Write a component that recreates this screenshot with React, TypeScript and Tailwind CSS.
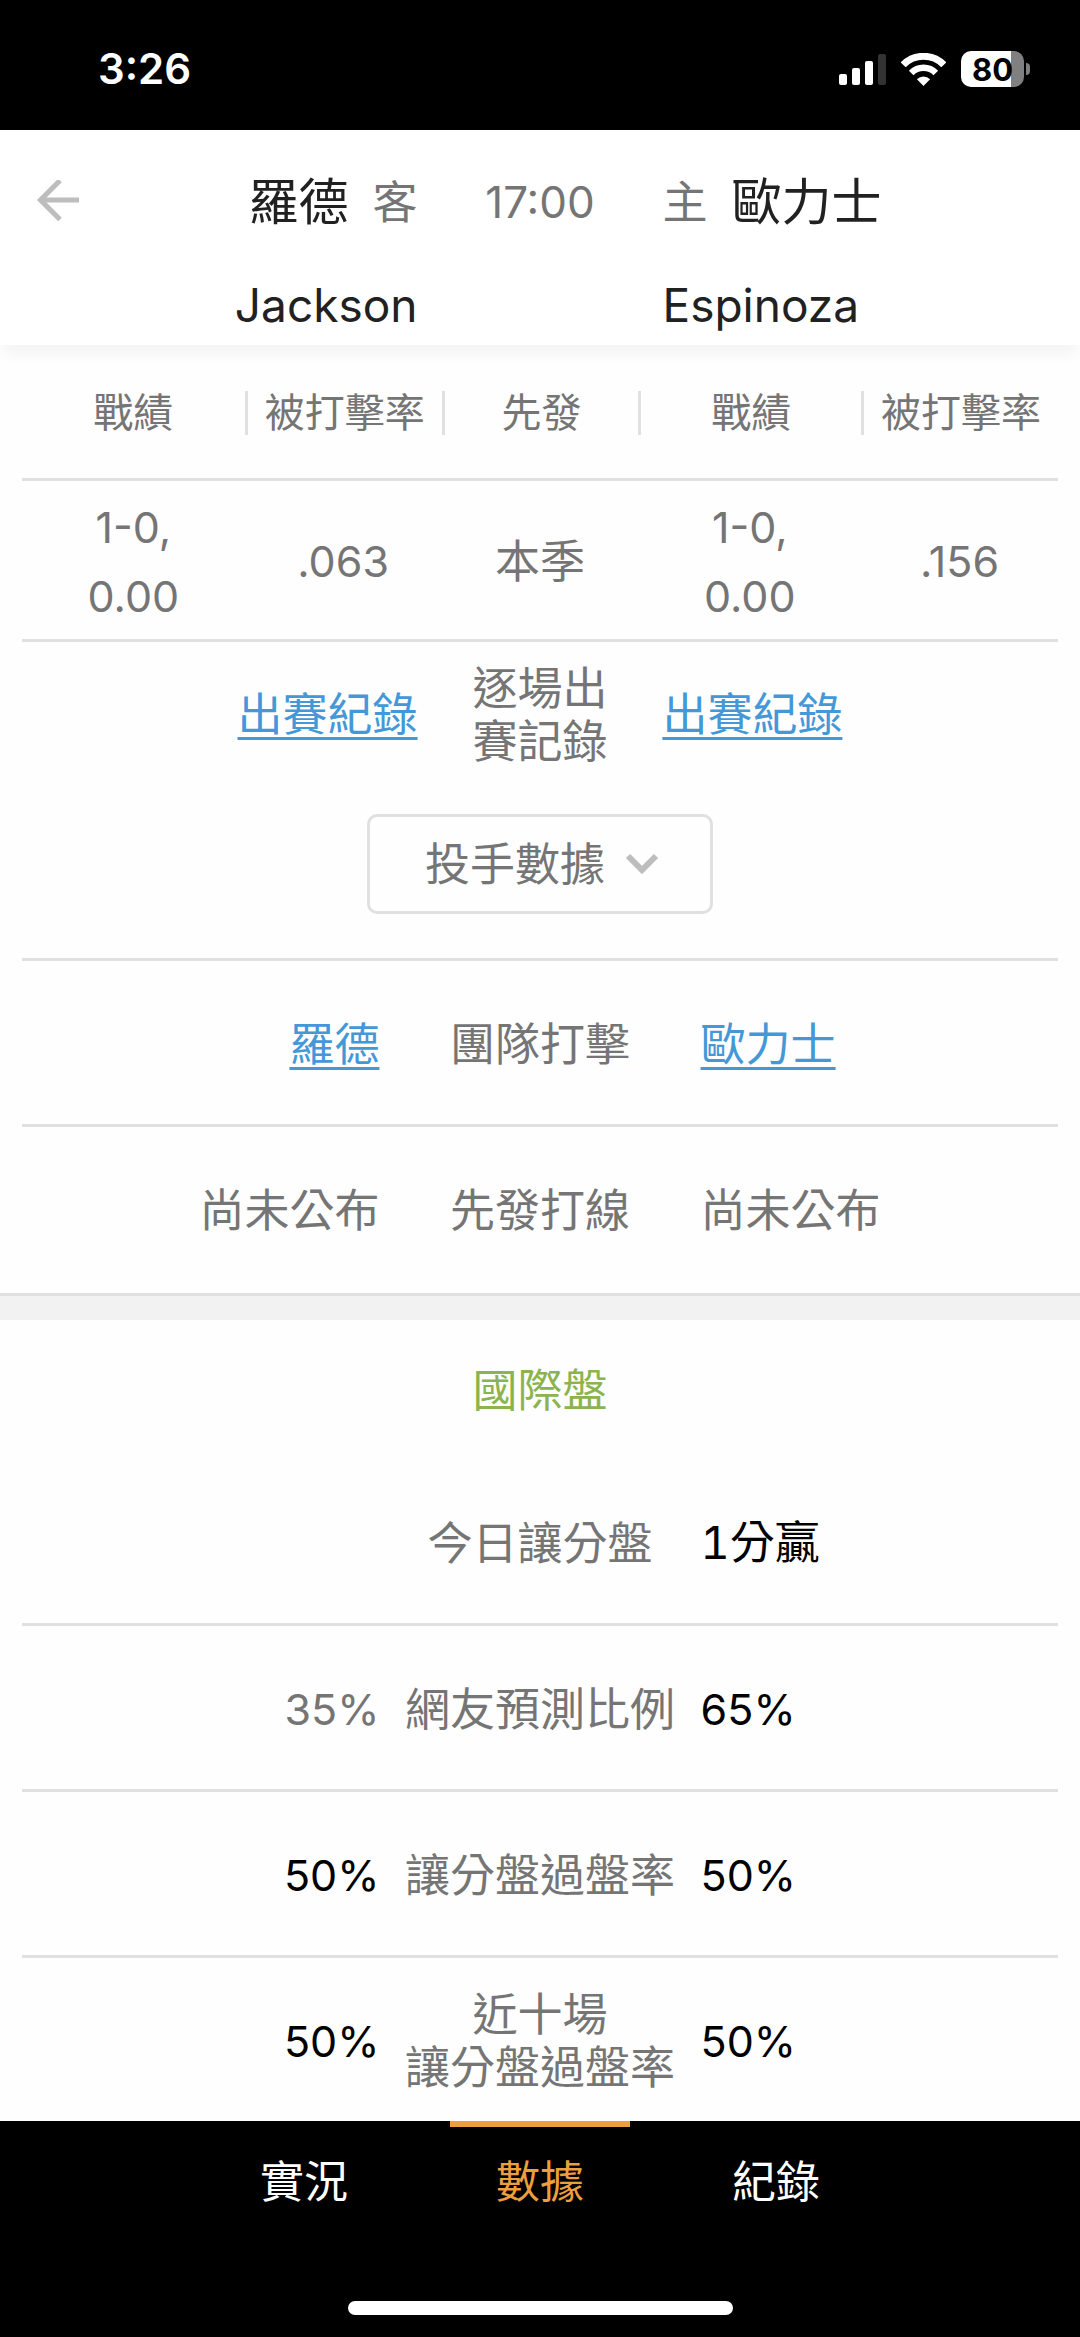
import { useState, type ReactNode } from 'react'

type Side = {
  team: string
  pitcher: string
  record: string
  era: string
  opponentAvg: string
}

type CompareRow = {
  label: ReactNode
  away: ReactNode
  home: ReactNode
  mutedAway?: boolean
}

const away: Side = { team: '羅德', pitcher: 'Jackson', record: '1-0,', era: '0.00', opponentAvg: '.063' }
const home: Side = { team: '歐力士', pitcher: 'Espinoza', record: '1-0,', era: '0.00', opponentAvg: '.156' }

const oddsRows: CompareRow[] = [
  { label: '今日讓分盤', away: '', home: <span className="text-[45px] tabular-nums">1分贏</span> },
  { label: '網友預測比例', away: '35%', home: '65%', mutedAway: true },
  { label: '讓分盤過盤率', away: '50%', home: '50%' },
  {
    label: (
      <>
        近十場
        <br />
        讓分盤過盤率
      </>
    ),
    away: '50%',
    home: '50%',
  },
]

const tabs = ['實況', '數據', '紀錄']

function StatusBar() {
  return (
    <div className="flex h-[130px] items-center justify-between bg-black pt-2 pr-[50px] pl-[98px] text-white">
      <span className="text-[42px] leading-none font-semibold">3:26</span>
      <div className="flex items-center gap-[15px]">
        {/* Signal */}
        <svg width="47" height="31" viewBox="0 0 47 31" fill="#fff" aria-hidden="true">
          <rect x="0" y="20" width="8" height="11" rx="2" />
          <rect x="13" y="14" width="8" height="17" rx="2" />
          <rect x="26" y="7" width="8" height="24" rx="2" />
          <rect x="39" y="0" width="8" height="31" rx="2" fill="#333" />
        </svg>
        {/* Wifi */}
        <svg width="45" height="33" viewBox="0 0 45 33" aria-hidden="true">
          <path d="M2.200 11.800a28.500 28.500 0 0 1 40.600 0" fill="none" stroke="#fff" strokeWidth="7" />
          <path d="M10.200 20a17.200 17.200 0 0 1 24.600 0" fill="none" stroke="#fff" strokeWidth="6.500" />
          <path d="M22.500 33l-6.600-6.800a9.600 9.600 0 0 1 13.200 0z" fill="#fff" />
        </svg>
        {/* Battery */}
        <div className="flex items-center gap-0.5">
          <div className="flex h-9 w-[63px] items-center justify-center rounded-[10px] bg-linear-to-r from-white from-80% to-[#808080] to-80% text-[31px] leading-none font-bold text-black">
            80
          </div>
          <div className="h-3 w-1 rounded-r-full bg-[#808080]" />
        </div>
      </div>
    </div>
  )
}

function MatchHeader() {
  return (
    <header className="grid grid-cols-[1fr_245px_1fr] gap-y-[15px] bg-white pt-6 shadow-[0_14px_12px_-4px_rgba(0,0,0,0.04)]">
      <div className="flex h-24 items-center pl-9">
        <button type="button" aria-label="返回">
          <svg width="44" height="44" viewBox="0 0 44 44" fill="none" stroke="#bdbdbd" strokeWidth="5" aria-hidden="true">
            <path d="M43 20H5M24 0.500L4.500 20 24 39.500" />
          </svg>
        </button>
        <div className="ml-auto flex items-center gap-6">
          <span className="text-[50px] text-[#212121]">{away.team}</span>
          <span>客</span>
        </div>
      </div>
      <time className="flex h-24 items-center justify-center text-[44px]">17:00</time>
      <div className="flex h-24 items-center gap-6">
        <span>主</span>
        <span className="text-[50px] text-[#212121]">{home.team}</span>
      </div>
      <div className="flex h-20 items-center justify-end text-[46px] text-[#212121]">{away.pitcher}</div>
      <div />
      <div className="flex h-20 items-center text-[46px] text-[#212121]">{home.pitcher}</div>
    </header>
  )
}

function TextLink({ children }: { children: ReactNode }) {
  return (
    <a href="#" className="text-[#4598d8] underline decoration-[3px] underline-offset-[6px]">
      {children}
    </a>
  )
}

function PitcherTable() {
  const heading = 'h-[136px] border-b-[3px] border-[#e0e0e0] p-0 pt-0.5 font-normal'
  const cell = 'h-[161px] border-b-[3px] border-[#e0e0e0] p-0 pt-[3px] leading-[69px]'
  const numberCell = 'h-[161px] border-b-[3px] border-[#e0e0e0] p-0 pt-[3px] text-[43px] leading-[69px]'

  return (
    <table className="w-full table-fixed border-separate border-spacing-0 text-center">
      <colgroup>
        <col className="w-[21.5%]" />
        <col className="w-[19%]" />
        <col className="w-[19%]" />
        <col className="w-[21.5%]" />
        <col className="w-[19%]" />
      </colgroup>
      <thead>
        <tr className="text-[40px]">
          <th className={heading}>戰績</th>
          {['被打擊率', '先發', '戰績', '被打擊率'].map((title, i) => (
            <th key={i} className={heading}>
              <div className="h-11 border-l-[3px] border-[#e0e0e0] leading-[44px]">{title}</div>
            </th>
          ))}
        </tr>
      </thead>
      <tbody>
        <tr>
          <td className={numberCell}>
            {away.record}
            <br />
            {away.era}
          </td>
          <td className={numberCell}>{away.opponentAvg}</td>
          <td className={cell}>本季</td>
          <td className={numberCell}>
            {home.record}
            <br />
            {home.era}
          </td>
          <td className={numberCell}>{home.opponentAvg}</td>
        </tr>
        <tr>
          <td colSpan={2} className="h-[145px] p-0 pr-6 text-right">
            <TextLink>出賽紀錄</TextLink>
          </td>
          <td className="p-0 px-6 leading-[53px]">逐場出賽記錄</td>
          <td colSpan={2} className="p-0 pl-6 text-left">
            <TextLink>出賽紀錄</TextLink>
          </td>
        </tr>
      </tbody>
    </table>
  )
}

function CompareTable({ rows, strong }: { rows: CompareRow[]; strong?: boolean }) {
  const side = strong ? 'p-0 pt-[3px] text-[43px]' : 'p-0 pt-[3px]'

  return (
    <table className="w-full table-fixed border-separate border-spacing-0">
      <colgroup>
        <col />
        <col className="w-[31%]" />
        <col />
      </colgroup>
      <tbody className="[&>tr:not(:last-child)>*]:border-b-[3px] [&>tr:not(:last-child)>*]:border-[#e0e0e0]">
        {rows.map((row, i) => (
          <tr key={i} className={i < rows.length - 1 ? 'h-[166px]' : 'h-[163px]'}>
            <td className={`${side} text-right ${strong && !row.mutedAway ? 'text-black' : ''}`}>{row.away}</td>
            <th className="p-0 pt-[3px] leading-[53px] font-normal">{row.label}</th>
            <td className={`${side} text-left ${strong ? 'text-black' : ''}`}>{row.home}</td>
          </tr>
        ))}
      </tbody>
    </table>
  )
}

function TabBar() {
  const [active, setActive] = useState('數據')

  return (
    <nav className="sticky bottom-0 mt-auto flex h-[216px] flex-col items-center justify-between bg-black pb-[22px]">
      <div className="flex gap-14">
        {tabs.map((tab) => (
          <button
            key={tab}
            type="button"
            onClick={() => setActive(tab)}
            className={
              tab === active
                ? 'h-[122px] w-[180px] border-t-[6px] border-[#ec9f3e] pb-1.5 text-[44px] text-[#ec9f3e]'
                : 'h-[122px] w-[180px] text-[44px] text-white'
            }
          >
            {tab}
          </button>
        ))}
      </div>
      <div className="h-3.5 w-[385px] rounded-full bg-white" />
    </nav>
  )
}

export default function App() {
  const [open, setOpen] = useState(false)

  const teamRows: CompareRow[] = [
    { label: '團隊打擊', away: <TextLink>{away.team}</TextLink>, home: <TextLink>{home.team}</TextLink> },
    { label: '先發打線', away: '尚未公布', home: '尚未公布' },
  ]

  return (
    <div
      lang="zh-Hant"
      className="flex min-h-screen flex-col bg-[#fefefe] font-['Inter','Noto_Sans_CJK_TC',sans-serif] text-[45px] leading-[53px] text-[#757575]"
    >
      <StatusBar />
      <MatchHeader />

      <main>
        <section className="px-[22px] pb-[3px]">
          <PitcherTable />
          <div className="flex justify-center border-b-[3px] border-[#e0e0e0] pt-[27px] pb-11">
            <button
              type="button"
              aria-expanded={open}
              onClick={() => setOpen(!open)}
              className="flex h-[100px] w-[346px] items-center justify-center gap-5 rounded-[10px] border-[3px] border-[#e0e0e0] pl-1"
            >
              投手數據
              <svg width="34" height="22" viewBox="0 0 34 22" fill="none" stroke="#bdbdbd" strokeWidth="6" aria-hidden="true">
                <path d="M3 3l14 14L31 3" />
              </svg>
            </button>
          </div>
          <CompareTable rows={teamRows} />
        </section>

        <div className="h-[27px] border-t-[3px] border-[#e0e0e0] bg-[#f2f2f2]" />

        <section className="px-[22px]">
          <h2 className="flex h-[140px] items-center justify-center text-[#8bb44f]">國際盤</h2>
          <CompareTable rows={oddsRows} strong />
        </section>
      </main>

      <TabBar />
    </div>
  )
}
